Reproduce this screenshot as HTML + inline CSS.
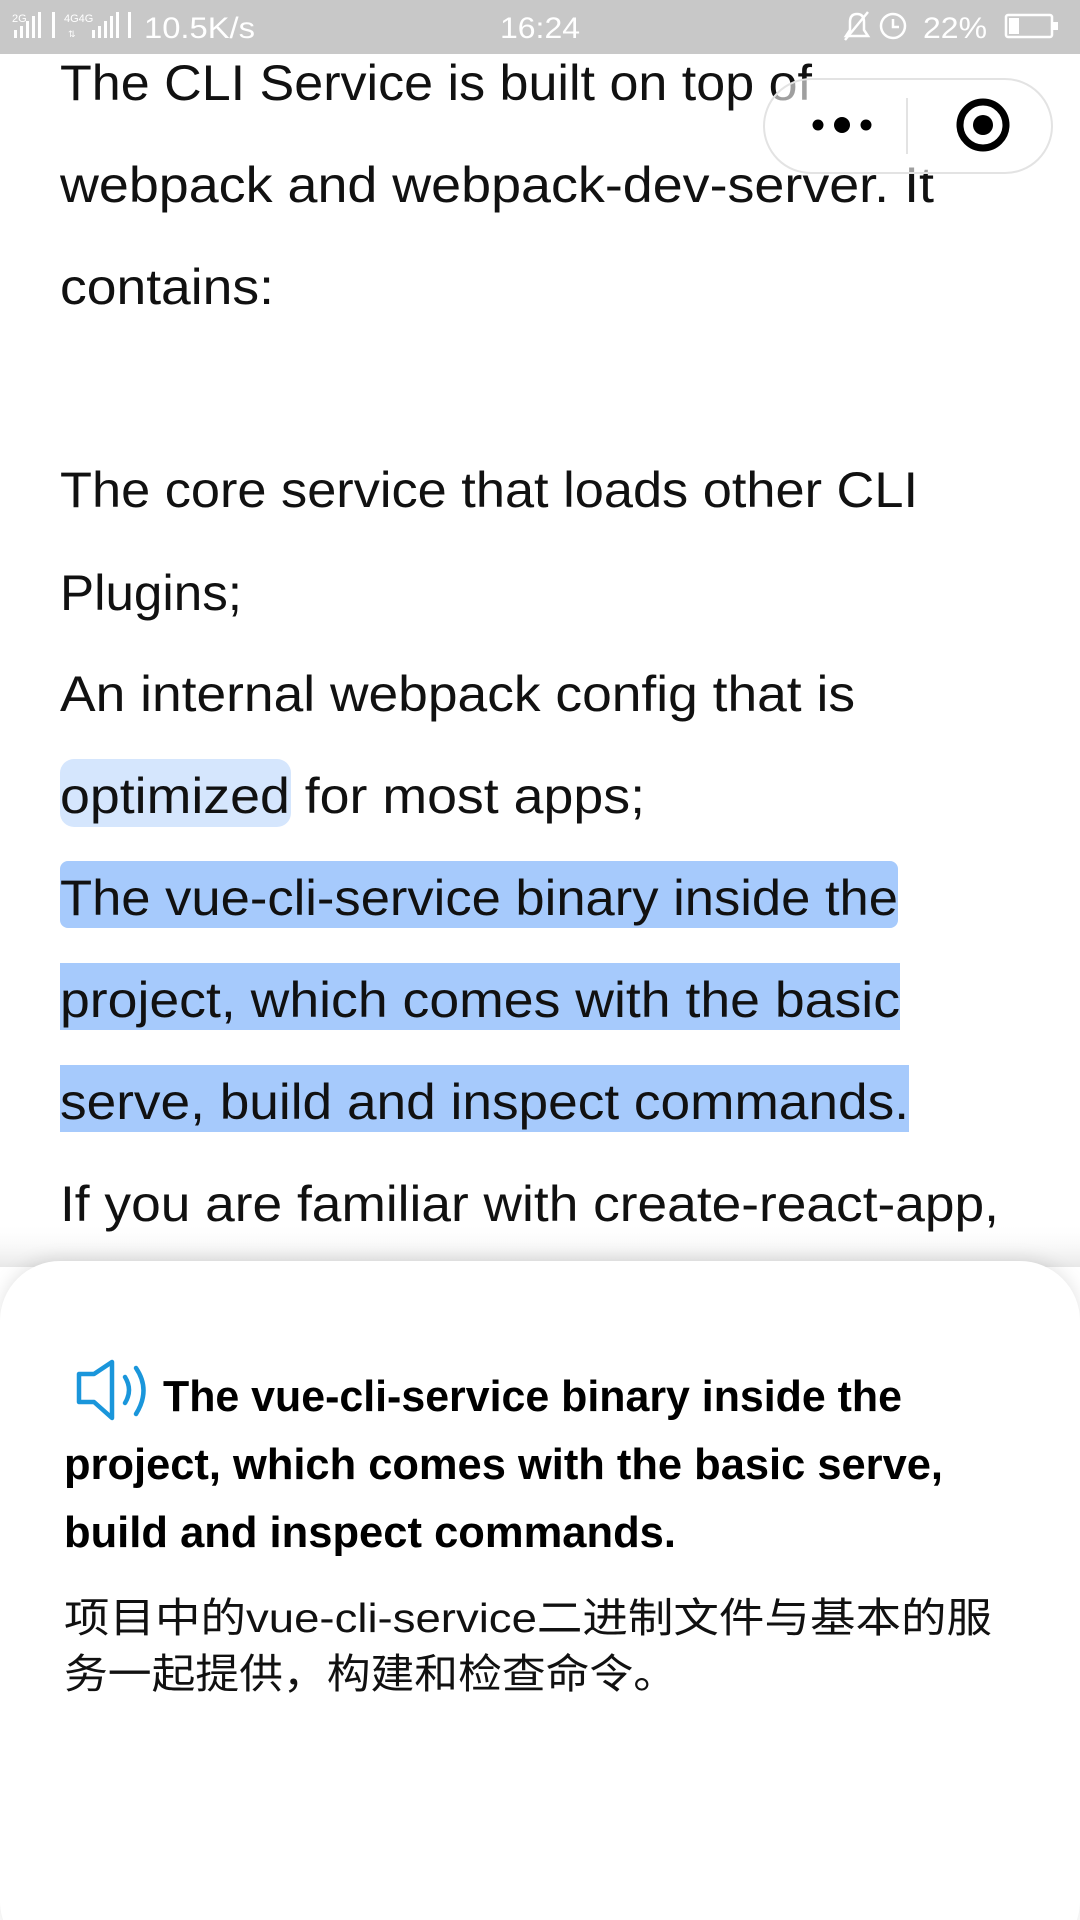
<!DOCTYPE html>
<html><head><meta charset="utf-8"><style>
html,body{margin:0;padding:0;width:1080px;height:1920px;overflow:hidden;background:#fff}
svg{display:block}
</style></head><body>
<svg width="1080" height="1920" viewBox="0 0 1080 1920" xmlns="http://www.w3.org/2000/svg" font-family="Liberation Sans, sans-serif">
<defs>
<linearGradient id="fade" x1="0" y1="0" x2="0" y2="1">
<stop offset="0" stop-color="#fff" stop-opacity="0"/>
<stop offset="1" stop-color="#e8e8e8" stop-opacity="1"/>
</linearGradient>
<filter id="sh" x="-10%" y="-10%" width="120%" height="120%"><feGaussianBlur stdDeviation="8"/></filter>
</defs>
<rect x="0" y="0" width="1080" height="1920" fill="#fff"/>
<rect x="0" y="1222" width="1080" height="45" fill="url(#fade)"/>
<!-- highlights -->
<rect x="60" y="759" width="231" height="68" rx="14" fill="#d5e6fd"/>
<rect x="60" y="861" width="838" height="67" rx="8" fill="#a6cafc"/>
<rect x="60" y="963" width="840" height="67" fill="#a6cafc"/>
<rect x="60" y="1065" width="849" height="67" fill="#a6cafc"/>
<!-- body text -->
<g font-size="50" fill="#111">
<text x="60" y="100" textLength="752" lengthAdjust="spacingAndGlyphs">The CLI Service is built on top of</text>
<text x="60" y="202" textLength="874" lengthAdjust="spacingAndGlyphs">webpack and webpack-dev-server. It</text>
<text x="60" y="304" textLength="214" lengthAdjust="spacingAndGlyphs">contains:</text>
<text x="60" y="507" textLength="858" lengthAdjust="spacingAndGlyphs">The core service that loads other CLI</text>
<text x="60" y="610" textLength="182" lengthAdjust="spacingAndGlyphs">Plugins;</text>
<text x="60" y="711" textLength="795" lengthAdjust="spacingAndGlyphs">An internal webpack config that is</text>
<text x="60" y="813" textLength="585" lengthAdjust="spacingAndGlyphs">optimized for most apps;</text>
<text x="60" y="915" textLength="838" lengthAdjust="spacingAndGlyphs">The vue-cli-service binary inside the</text>
<text x="60" y="1017" textLength="840" lengthAdjust="spacingAndGlyphs">project, which comes with the basic</text>
<text x="60" y="1119" textLength="849" lengthAdjust="spacingAndGlyphs">serve, build and inspect commands.</text>
<text x="60" y="1221" textLength="939" lengthAdjust="spacingAndGlyphs">If you are familiar with create-react-app,</text>
</g>
<!-- capsule -->
<rect x="764" y="79" width="288" height="94" rx="47" fill="#fff" fill-opacity="0.6" stroke="#e3e3e3" stroke-width="2"/>
<line x1="907" y1="98" x2="907" y2="154" stroke="#e3e3e3" stroke-width="2"/>
<circle cx="818" cy="125" r="5.5" fill="#000"/>
<circle cx="842" cy="125" r="8" fill="#000"/>
<circle cx="866" cy="125" r="5.5" fill="#000"/>
<circle cx="983" cy="125" r="23" fill="none" stroke="#000" stroke-width="7"/>
<circle cx="983" cy="125" r="10" fill="#000"/>
<!-- panel -->
<rect x="0" y="1258" width="1080" height="700" rx="60" fill="#000" fill-opacity="0.10" filter="url(#sh)"/>
<rect x="0" y="1261" width="1080" height="700" rx="60" fill="#fff"/>
<!-- speaker -->
<g fill="none" stroke="#1a96db" stroke-width="4.5" stroke-linejoin="round" stroke-linecap="round">
<path d="M79 1374 H94 L112 1362 V1418 L94 1402 H79 Z"/>
<path d="M125 1377 Q133 1390 125 1403"/>
<path d="M136 1368 Q151 1390 136 1414"/>
</g>
<g font-size="44" font-weight="bold" fill="#000">
<text x="163" y="1411" textLength="739" lengthAdjust="spacingAndGlyphs">The vue-cli-service binary inside the</text>
<text x="64" y="1479" textLength="879" lengthAdjust="spacingAndGlyphs">project, which comes with the basic serve,</text>
<text x="64" y="1547" textLength="612" lengthAdjust="spacingAndGlyphs">build and inspect commands.</text>
</g>
<g font-size="41" fill="#111" font-family="Liberation Sans, Noto Sans CJK SC, sans-serif">
<text x="64" y="1632" textLength="928" lengthAdjust="spacingAndGlyphs">项目中的vue-cli-service二进制文件与基本的服</text>
<text x="64" y="1688" textLength="613" lengthAdjust="spacingAndGlyphs">务一起提供，构建和检查命令。</text>
</g>
<!-- status bar -->
<rect x="0" y="0" width="1080" height="54" fill="#c8c8c8"/>
<g fill="#fff">
<text x="12" y="22" font-size="11">2G</text>
<rect x="14" y="30" width="3" height="8"/><rect x="20" y="26" width="3" height="12"/><rect x="26" y="21" width="3" height="17"/><rect x="32" y="16" width="3" height="22"/><rect x="38" y="12" width="3" height="26"/>
<rect x="52" y="12" width="3" height="26"/>
<text x="64" y="22" font-size="11">4G4G</text>
<text x="68" y="37" font-size="9">⇅</text>
<rect x="92" y="30" width="3" height="8"/><rect x="98" y="26" width="3" height="12"/><rect x="104" y="21" width="3" height="17"/><rect x="110" y="16" width="3" height="22"/><rect x="116" y="12" width="3" height="26"/>
<rect x="128" y="12" width="3" height="26"/>
<text x="144" y="38" font-size="30" textLength="111" lengthAdjust="spacingAndGlyphs">10.5K/s</text>
<text x="500" y="38" font-size="30" textLength="80" lengthAdjust="spacingAndGlyphs">16:24</text>
<text x="923" y="38" font-size="30" textLength="64" lengthAdjust="spacingAndGlyphs">22%</text>
</g>
<g fill="none" stroke="#fff" stroke-width="2.5">
<path d="M846 36 H868 L864 30 V22 Q864 14 857 14 Q850 14 850 22 V30 Z"/>
<line x1="845" y1="40" x2="868" y2="12"/>
<circle cx="893" cy="26" r="12"/>
<path d="M893 19 V27 H899"/>
<rect x="1006" y="15" width="46" height="22" rx="2"/>
</g>
<rect x="1009" y="18" width="10" height="16" fill="#fff"/>
<rect x="1053" y="22" width="5" height="8" fill="#fff"/>
</svg>
</body></html>
